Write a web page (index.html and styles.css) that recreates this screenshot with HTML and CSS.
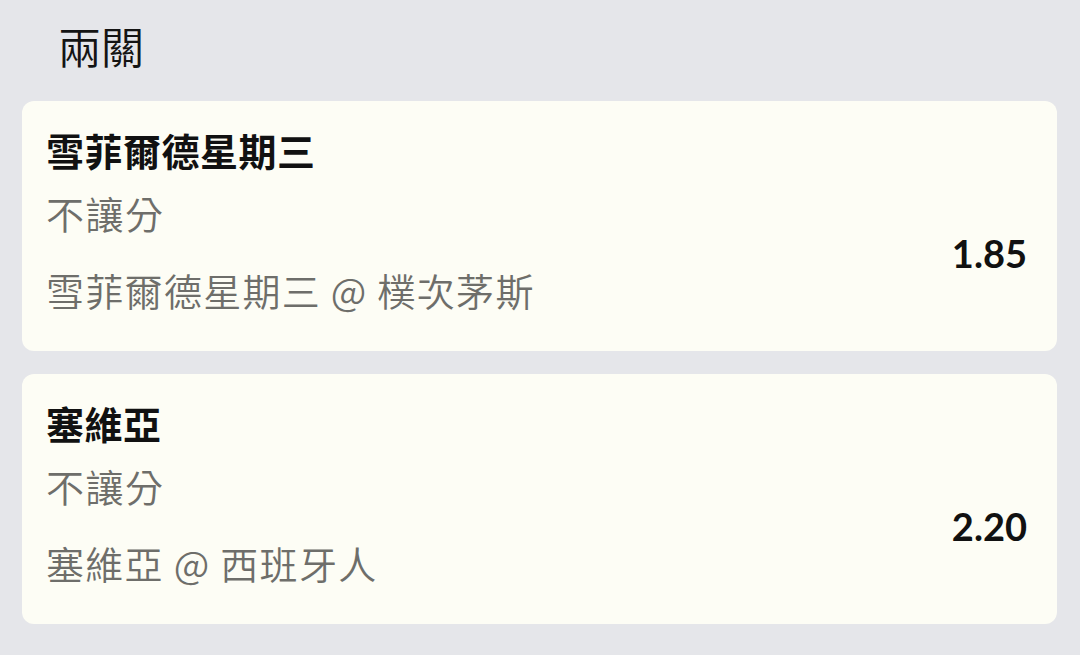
FILE: index.html
```html
<!DOCTYPE html>
<html lang="zh-Hant">
<head>
<meta charset="utf-8">
<title>兩關</title>
<link rel="stylesheet" href="styles.css">
</head>
<body>
<div class="page">
  <h1 class="heading">兩關</h1>
  <div class="list">
    <div class="card">
      <div class="info">
        <div class="team">雪菲爾德星期三</div>
        <div class="market">不讓分</div>
        <div class="match">雪菲爾德星期三 @ 樸次茅斯</div>
      </div>
      <div class="odds">1.85</div>
    </div>
    <div class="card">
      <div class="info">
        <div class="team">塞維亞</div>
        <div class="market">不讓分</div>
        <div class="match">塞維亞 @ 西班牙人</div>
      </div>
      <div class="odds">2.20</div>
    </div>
  </div>
</div>
</body>
</html>
```

FILE: styles.css
```css
html, body {
  margin: 0;
  padding: 0;
  background: #e5e6ea;
}
.page {
  width: 1080px;
  height: 655px;
  box-sizing: border-box;
  padding: 20px 23px 0 22px;
  font-family: "Noto Sans CJK TC", "Noto Sans", sans-serif;
}
.heading {
  margin: 0 0 31px 36px;
  font-size: 43px;
  line-height: 50px;
  font-weight: 350;
  color: #141414;
}
.list {
  display: flex;
  flex-direction: column;
  gap: 23px;
}
.card {
  display: flex;
  justify-content: space-between;
  align-items: flex-start;
  background: #fdfdf5;
  border-radius: 12px;
  padding: 24px 30px 36px 24px;
}
.info {
  display: flex;
  flex-direction: column;
}
.team {
  font-size: 38px;
  line-height: 50px;
  font-weight: 700;
  color: #111111;
  letter-spacing: 0.5px;
}
.market {
  margin-top: 13px;
  font-size: 38px;
  line-height: 50px;
  font-weight: 350;
  color: #6e6e6a;
  letter-spacing: 1.5px;
}
.match {
  margin-top: 27px;
  font-size: 38px;
  line-height: 50px;
  font-weight: 350;
  color: #6e6e6a;
  letter-spacing: 1.3px;
}
.odds {
  margin-top: 103px;
  font-family: "Lato", "Liberation Sans", sans-serif;
  font-weight: 700;
  font-size: 38px;
  line-height: 50px;
  color: #111111;
}
```
